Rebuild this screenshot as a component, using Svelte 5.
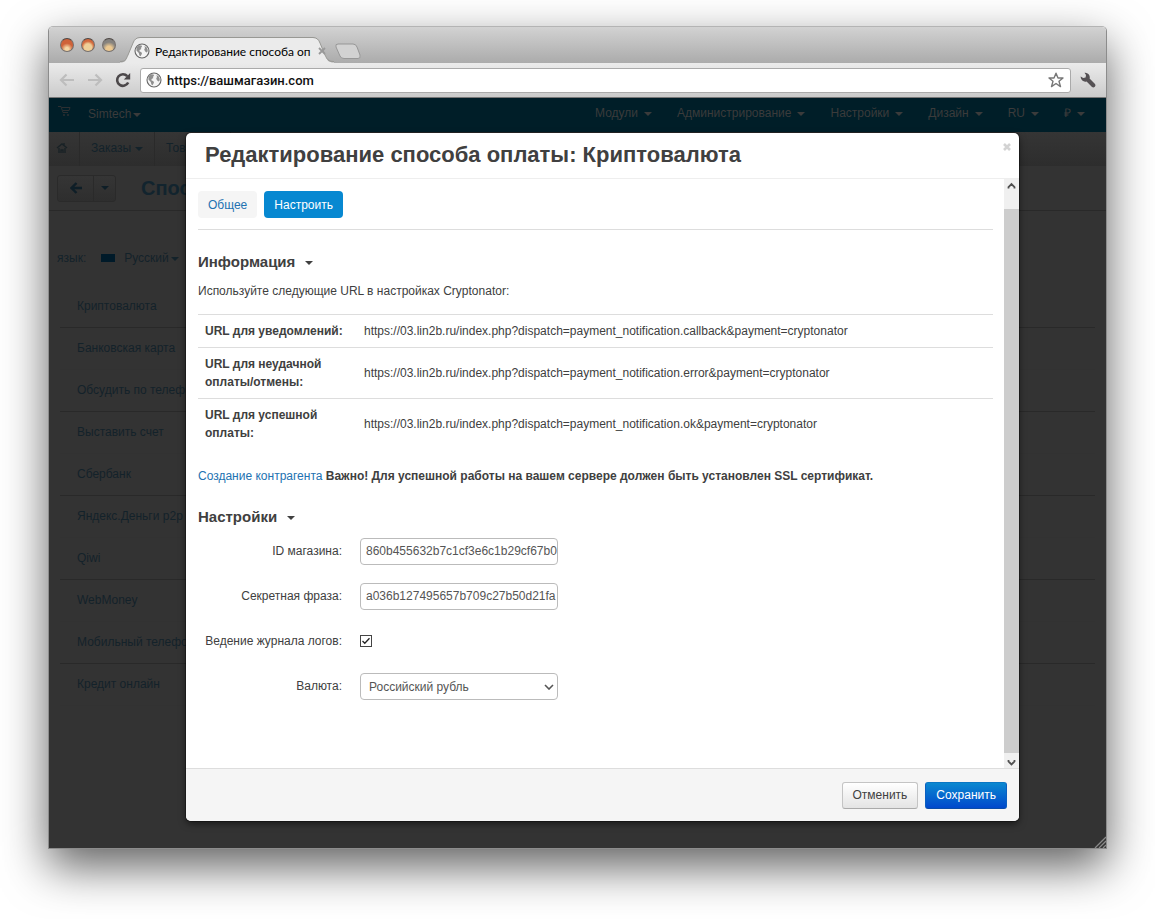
<script lang="ts">
  const topMenu = ['Модули', 'Администрирование', 'Настройки', 'Дизайн', 'RU', '₽'];

  const payments = [
    'Криптовалюта',
    'Банковская карта',
    'Обсудить по телефону',
    'Выставить счет',
    'Сбербанк',
    'Яндекс.Деньги p2p',
    'Qiwi',
    'WebMoney',
    'Мобильный телефон',
    'Кредит онлайн',
  ];

  const base = 'https://03.lin2b.ru/index.php?dispatch=payment_notification';
  const urls = [
    { label: 'URL для уведомлений:', action: 'callback' },
    { label: 'URL для неудачной оплаты/отмены:', action: 'error' },
    { label: 'URL для успешной оплаты:', action: 'ok' },
  ];

  let address = $state('https://вашмагазин.com');
  let shopId = $state('860b455632b7c1cf3e6c1b29cf67b0');
  let secret = $state('a036b127495657b709c27b50d21fa');
  let logging = $state(true);
  let currency = $state('RUB');
  let tab = $state('settings');
</script>

{#snippet globe()}
  <svg class="globe" viewBox="0 0 16 16" width="16" height="16" aria-hidden="true">
    <circle cx="8" cy="8" r="7" fill="#f4f4f4" stroke="#666" stroke-width="1.1" />
    <path d="M2.600 4.500 5 2.200 7.600 2.400 8 3.800 6.800 5 7.400 6 5.600 7 5.400 8.200 7.400 9.200 8 10.600 6.600 13.200 5.400 12.400 4.800 10 2.400 7.600Z" fill="#8f8f8f" />
    <path d="M10.400 3 12.600 4.200 13.800 7 13.400 9 12.400 9.400 11 8.200 10.200 6.400 11 5Z" fill="#8f8f8f" />
  </svg>
{/snippet}

<div class="window">
  <header class="titlebar">
    <div class="lights">
      <button class="light red" aria-label="Закрыть окно"></button>
      <button class="light orange" aria-label="Свернуть окно"></button>
      <button class="light grey" aria-label="Развернуть окно"></button>
    </div>
    <div class="browser-tab">
      <svg class="tab-shape" viewBox="0 0 214 26" width="214" height="26" aria-hidden="true">
        <path
          d="M0 25.500C6 25.500 6 23 8 18L13 6Q15 1 20 1H193Q198 1 200 6L205 18C207 23 208 25.500 214 25.500V26H0Z"
          fill="#ebebeb"
        />
        <path
          d="M0 24.500C6 24.500 6 22 8 18L13 6Q15 .5 20 .5H193Q198 .5 200 6L205 18C207 22 208 24.500 214 24.500"
          fill="none"
          stroke="#989894"
        />
      </svg>
      {@render globe()}
      <span class="tab-title">Редактирование способа оп</span>
      <button class="tab-close" aria-label="Закрыть вкладку">
        <svg viewBox="0 0 8 8" width="8" height="8"><path d="M1 1 7 7M7 1 1 7" stroke="#999" stroke-width="1.800" /></svg>
      </button>
    </div>
    <button class="new-tab" aria-label="Новая вкладка">
      <svg viewBox="0 0 28 17" width="28" height="17">
        <path d="M4 1H19Q22 1 23 4L26 12Q27 15.500 24 15.500H10Q7 15.500 6 13L2 4Q1 1 4 1Z" fill="#d2d2d2" stroke="#979797" />
      </svg>
    </button>
  </header>

  <div class="toolbar">
    <button class="tool" aria-label="Назад">
      <svg viewBox="0 0 16 16" width="16" height="16"><path d="M15 8H3M7.500 2.500 2 8 7.500 13.500" fill="none" stroke="#bdbdbd" stroke-width="2.200" /></svg>
    </button>
    <button class="tool" aria-label="Вперёд">
      <svg viewBox="0 0 16 16" width="16" height="16"><path d="M1 8H13M8.500 2.500 14 8 8.500 13.500" fill="none" stroke="#bdbdbd" stroke-width="2.200" /></svg>
    </button>
    <button class="tool" aria-label="Обновить">
      <svg viewBox="0 0 16 16" width="16" height="16">
        <path d="M13.200 10.500A5.800 5.800 0 1 1 12.300 4.200" fill="none" stroke="#4c484a" stroke-width="2.600" />
        <path d="M15.200 1V7.400H8.800Z" fill="#4c484a" />
      </svg>
    </button>
    <div class="address">
      {@render globe()}
      <input class="address-input" type="text" aria-label="Адрес" bind:value={address} />
      <button class="tool" aria-label="В закладки">
        <svg viewBox="0 0 16 16" width="16" height="16">
          <path d="M8 1.200 10 6H15L11 9.200 12.500 14.600 8 11.500 3.500 14.600 5 9.200 1 6H6Z" fill="#fff" stroke="#777" stroke-width="1.400" stroke-linejoin="round" />
        </svg>
      </button>
    </div>
    <button class="tool" aria-label="Настройки браузера">
      <svg viewBox="0 0 16 16" width="16" height="16">
        <path d="M4.500 .8A4.600 4.600 0 0 1 9.600 6.600L15 12Q16 13.500 14.800 14.800 13.500 16 12 15L6.600 9.400A4.600 4.600 0 0 1 .7 4.400L3.200 6 5.600 5.400 6 3Z" fill="#555154" />
      </svg>
    </button>
  </div>

  <div class="viewport">
    <div class="page">
      <nav class="navbar">
        <svg class="cart" viewBox="0 0 14 12" width="14" height="12" aria-hidden="true">
          <path d="M0 1.500H3L5 7.500H10M4 2.500H12L11 5.500H5" fill="none" stroke="#2c2f31" />
          <circle cx="6" cy="10" r="1" fill="#2c2f31" /><circle cx="10" cy="10" r="1" fill="#2c2f31" />
        </svg>
        <a class="brand" href="#shop">Simtech<i class="caret"></i></a>
        <div class="menu">
          {#each topMenu as item}
            <a href="#menu">{item}<i class="caret"></i></a>
          {/each}
        </div>
      </nav>

      <nav class="subnav">
        <a class="home" href="#home" aria-label="Главная">
          <svg viewBox="0 0 12 12" width="12" height="12"><path d="M1 6 6 2 11 6M3 6V11M9 6V11M5 11V8H7V11M8 1V3" fill="none" stroke="#192226" stroke-width="1.400" /></svg>
        </a>
        <a href="#orders">Заказы<i class="caret"></i></a>
        <a href="#products">Товары<i class="caret"></i></a>
      </nav>

      <div class="actions">
        <div class="back-group">
          <button aria-label="К списку">
            <svg viewBox="0 0 12 12" width="12" height="12"><path d="M12 6H2M6.500 1 1.500 6 6.500 11" fill="none" stroke="#0e1e27" stroke-width="2.400" /></svg>
          </button>
          <button aria-label="Ещё"><i class="caret"></i></button>
        </div>
        <h1>Способы оплаты</h1>
      </div>

      <div class="language">
        <span>язык:</span>
        <i class="flag"></i>
        <a href="#lang">Русский<i class="caret"></i></a>
      </div>

      <ul class="payments">
        {#each payments as payment}
          <li><a href="#payment">{payment}</a></li>
        {/each}
      </ul>
    </div>

    <div class="overlay">
      <div class="modal" role="dialog" aria-labelledby="modal-title">
        <div class="modal-header">
          <h2 id="modal-title">Редактирование способа оплаты: Криптовалюта</h2>
          <button class="modal-close" aria-label="Закрыть">
            <svg viewBox="0 0 8 8" width="8" height="8"><path d="M1 1 7 7M7 1 1 7" stroke="#d3d3d3" stroke-width="2.600" /></svg>
          </button>
        </div>

        <div class="modal-body">
          <div class="content">
            <div class="tabs">
              <button class:active={tab === 'general'} onclick={() => (tab = 'general')}>Общее</button>
              <button class:active={tab === 'settings'} onclick={() => (tab = 'settings')}>Настроить</button>
            </div>

            <h3>Информация<i class="caret"></i></h3>
            <p>Используйте следующие URL в настройках Cryptonator:</p>

            <table>
              <tbody>
                {#each urls as url}
                  <tr>
                    <th scope="row">{url.label}</th>
                    <td>{base}.{url.action}&payment=cryptonator</td>
                  </tr>
                {/each}
              </tbody>
            </table>

            <p>
              <a href="#account">Создание контрагента</a>
              <strong>Важно! Для успешной работы на вашем сервере должен быть установлен SSL сертификат.</strong>
            </p>

            <h3>Настройки<i class="caret"></i></h3>
            <form>
              <label for="shop-id">ID магазина:</label>
              <input id="shop-id" class="field" type="text" bind:value={shopId} />

              <label for="secret">Секретная фраза:</label>
              <input id="secret" class="field" type="text" bind:value={secret} />

              <label for="logging">Ведение журнала логов:</label>
              <div class="check">
                <input id="logging" type="checkbox" bind:checked={logging} />
                {#if logging}
                  <svg viewBox="0 0 12 12" width="12" height="12" aria-hidden="true"><path d="M2.500 6 4.800 8.300 9.500 3.300" fill="none" stroke="#222" stroke-width="1.300" /></svg>
                {/if}
              </div>

              <label for="currency">Валюта:</label>
              <div class="select">
                <select id="currency" class="field" bind:value={currency}>
                  <option value="RUB">Российский рубль</option>
                  <option value="USD">Доллар США</option>
                  <option value="EUR">Евро</option>
                </select>
                <svg viewBox="0 0 10 6" width="10" height="6" aria-hidden="true"><path d="M1 1 5 5 9 1" fill="none" stroke="#555" stroke-width="1.600" /></svg>
              </div>
            </form>
          </div>

          <div class="scrollbar" aria-hidden="true">
            <svg viewBox="0 0 15 15" width="15" height="15"><path d="M4.500 9.500V8L7.500 5 10.500 8V9.500" fill="none" stroke="#505050" stroke-width="1.800" /></svg>
            <div class="thumb"></div>
            <svg viewBox="0 0 15 15" width="15" height="15"><path d="M4.500 7V8.500L7.500 11.500 10.500 8.500V7" fill="none" stroke="#505050" stroke-width="1.800" /></svg>
          </div>
        </div>

        <div class="modal-footer">
          <button class="btn">Отменить</button>
          <button class="btn primary">Сохранить</button>
        </div>
      </div>
    </div>

    <svg class="grip" viewBox="0 0 12 12" width="12" height="12" aria-hidden="true">
      <path d="M1 12 12 1M5 12 12 5M9 12 12 9" stroke="#8a8a8a" stroke-width="1.300" />
    </svg>
  </div>
</div>

<style>
  :global(body) {
    background: #fff;
    font: 12px/18px 'Liberation Sans', Arial, sans-serif;
    color: #404040;
  }

  a {
    color: #2272b1;
    text-decoration: none;
  }

  button {
    display: flex;
    align-items: center;
    justify-content: center;
    padding: 0;
    border: none;
    background: none;
    font: inherit;
    color: inherit;
    cursor: pointer;
  }

  svg {
    flex-shrink: 0;
  }

  .caret {
    display: inline-block;
    border: 4px solid transparent;
    border-top-color: currentColor;
    border-bottom: none;
    vertical-align: middle;
    margin-left: 8px;
  }

  .window {
    margin: 26px 48px 70px 48px;
    border: 1px solid #8c8c8c;
    border-top-color: #b4b4b4;
    border-radius: 5px 5px 0 0;
    box-shadow: 0 18px 46px rgba(0, 0, 0, 0.62);
  }

  .titlebar {
    display: flex;
    align-items: flex-end;
    height: 36px;
    background: linear-gradient(#d2d2d2, #ababab);
    border-radius: 4px 4px 0 0;
  }

  .lights {
    display: flex;
    gap: 7px;
    padding: 0 4px 11px 11px;
  }

  .light {
    width: 14px;
    height: 14px;
    border-radius: 50%;
    border: 1px solid #77706c;
    border-top-color: #4c4744;
  }

  .red {
    background: radial-gradient(circle at 50% 85%, #f4d6a4 15%, #cf6239 50%);
  }

  .orange {
    background: radial-gradient(circle at 50% 70%, #efcf98 35%, #d3693d 60%);
  }

  .grey {
    background: radial-gradient(circle at 50% 85%, #ecc890 25%, #85827e 60%);
  }

  .browser-tab {
    position: relative;
    display: flex;
    align-items: center;
    width: 214px;
    height: 26px;
    padding: 2px 0 0 14px;
    box-sizing: border-box;
  }

  .tab-shape {
    position: absolute;
    left: 0;
    top: 0;
  }

  .globe,
  .tab-title,
  .tab-close {
    position: relative;
  }

  .tab-title {
    margin-left: 5px;
    padding-top: 2px;
    font: 12px/16px Lato, 'Noto Sans', sans-serif;
    color: #000;
    white-space: nowrap;
  }

  .tab-close {
    margin-left: 7px;
  }

  .new-tab {
    padding-bottom: 3px;
  }

  .toolbar {
    display: flex;
    align-items: center;
    gap: 12px;
    height: 35px;
    padding: 0 10px;
    box-sizing: border-box;
    background: linear-gradient(#ebebeb, #cbcbcb);
    border-bottom: 1px solid #777;
  }

  .address {
    flex: 1;
    display: flex;
    align-items: center;
    height: 23px;
    margin: 0 -3px;
    padding: 0 6px 0 5px;
    background: #fff;
    border: 1px solid #aaa;
    border-radius: 3px;
  }

  .address-input {
    flex: 1;
    min-width: 0;
    border: none;
    outline: none;
    padding: 2px 5px 0;
    background: none;
    font: 500 13px/20px Roboto, 'Liberation Sans', sans-serif;
    color: #111;
  }

  /* the page and the overlay share one cell, the modal sets the height */
  .viewport {
    position: relative;
    display: grid;
    background: #333;
  }

  .page,
  .overlay {
    grid-area: 1 / 1;
    min-width: 0;
  }

  .page a,
  .page .language {
    color: #13222a;
  }

  .page .navbar a {
    color: #3b3b3b;
    white-space: nowrap;
  }

  .navbar {
    display: flex;
    height: 34px;
    padding: 0 21px 0 9px;
    box-sizing: border-box;
    background: #001e28;
    line-height: 30px;
  }

  .cart {
    margin-top: 7px;
  }

  .navbar .brand {
    margin-left: 16px;
    line-height: 32px;
  }

  .brand .caret {
    margin-left: 2px;
  }

  .menu {
    display: flex;
    gap: 25px;
    margin-left: auto;
  }

  .menu .caret {
    margin-left: 6px;
  }

  .subnav {
    display: flex;
    height: 34px;
    line-height: 33px;
    background: linear-gradient(#353535, #2d2d2d);
  }

  .subnav a {
    padding: 0 11px;
    border-right: 1px solid #2a2a2a;
  }

  .subnav .home {
    padding: 2px 11px 0 7px;
  }

  .subnav .caret {
    margin-left: 4px;
  }

  .actions {
    display: flex;
    align-items: center;
    height: 44px;
    padding-left: 8px;
    border-bottom: 1px solid #292929;
  }

  .back-group {
    display: flex;
    border: 1px solid #2a2a2a;
    border-radius: 3px;
    background: linear-gradient(#353535, #2e2e2e);
    color: #0e1e27;
  }

  .back-group button {
    width: 35px;
    height: 25px;
  }

  .back-group button + button {
    width: 22px;
    border-left: 1px solid #2a2a2a;
  }

  .back-group .caret {
    margin: 0;
  }

  h1 {
    margin: 0 0 0 25px;
    font-size: 20px;
    line-height: 24px;
    color: #12242e;
  }

  .language {
    display: flex;
    align-items: center;
    padding: 38px 0 19px 8px;
  }

  .flag {
    width: 14px;
    height: 8px;
    margin: 0 9px 0 15px;
    background: #001a29;
  }

  .language .caret {
    margin-left: 2px;
  }

  .payments {
    list-style: none;
    margin: 0 11px;
    padding: 0;
  }

  .payments li {
    padding: 11px 0 12px 17px;
    border-bottom: 1px solid #323232;
  }

  .payments li:nth-child(odd) {
    border-color: #292929;
  }

  .overlay {
    padding: 35px 87px 27px 137px;
  }

  .modal {
    position: relative;
    overflow: hidden;
    background: #fff;
    border-radius: 5px;
    box-shadow: 0 3px 7px rgba(0, 0, 0, 0.5), 0 0 0 1px rgba(0, 0, 0, 0.3);
  }

  .modal-header {
    display: flex;
    align-items: flex-start;
    justify-content: space-between;
    height: 45px;
    padding: 0 8px 0 19px;
    border-bottom: 1px solid #eee;
  }

  h2 {
    margin: 0;
    font-size: 22px;
    line-height: 43px;
  }

  .modal-close {
    padding-top: 10px;
  }

  .modal-body {
    display: flex;
  }

  .content {
    flex: 1;
    min-width: 0;
    padding: 12px 11px 68px 12px;
  }

  .tabs {
    display: flex;
    gap: 7px;
    padding-bottom: 11px;
    border-bottom: 1px solid #ddd;
  }

  .tabs button {
    height: 27px;
    padding: 0 10px;
    border-radius: 4px;
    background: #f5f5f5;
    color: #2272b1;
  }

  .tabs button.active {
    background: #0788d1;
    color: #fff;
  }

  h3 {
    margin: 22px 0 10px;
    font-size: 15px;
    line-height: 20px;
  }

  h3 .caret {
    margin-left: 10px;
  }

  p {
    margin: 0;
  }

  table {
    width: 100%;
    margin: 14px 0 18px;
    border-collapse: collapse;
    table-layout: fixed;
  }

  th,
  td {
    padding: 7px;
    border-top: 1px solid #ddd;
    text-align: left;
  }

  th {
    width: 20%;
    box-sizing: border-box;
  }

  form {
    display: grid;
    grid-template-columns: 144px 198px;
    grid-auto-rows: 27px;
    align-items: center;
    gap: 18px;
    margin-top: 11px;
  }

  label {
    padding-bottom: 2px;
    text-align: right;
    white-space: nowrap;
  }

  .field {
    width: 100%;
    height: 27px;
    padding: 0 0 2px 5px;
    box-sizing: border-box;
    background: #fff;
    border: 1px solid #bbb;
    border-radius: 4px;
    font: inherit;
    color: #555;
  }

  .check {
    position: relative;
    display: flex;
    padding-bottom: 2px;
  }

  .check input {
    appearance: none;
    width: 12px;
    height: 12px;
    margin: 0;
    border: 1px solid #444;
  }

  .check svg {
    position: absolute;
    left: 0;
    pointer-events: none;
  }

  .select {
    position: relative;
  }

  .select select {
    appearance: none;
    padding: 0 8px;
  }

  .select svg {
    position: absolute;
    right: 4px;
    top: 11px;
    pointer-events: none;
  }

  .scrollbar {
    display: flex;
    flex-direction: column;
    width: 15px;
    background: #f0f0f0;
  }

  .thumb {
    flex: 1;
    margin-top: 15px;
    background: #cdcdcd;
  }

  .modal-footer {
    display: flex;
    justify-content: flex-end;
    gap: 7px;
    padding: 13px 12px 12px;
    background: #f5f5f5;
    border-top: 1px solid #ddd;
  }

  .btn {
    height: 27px;
    padding: 0 10px 1px;
    border: 1px solid #c4c4c4;
    border-bottom-color: #aaa;
    border-radius: 3px;
    background: linear-gradient(#fff, #e4e4e4);
  }

  .btn.primary {
    border-color: #0a76c4 #0a5fc0 #0a4ba8;
    background: linear-gradient(#0a88d0, #0048cc);
    color: #fff;
  }

  .grip {
    position: absolute;
    right: 0;
    bottom: 0;
  }
</style>
